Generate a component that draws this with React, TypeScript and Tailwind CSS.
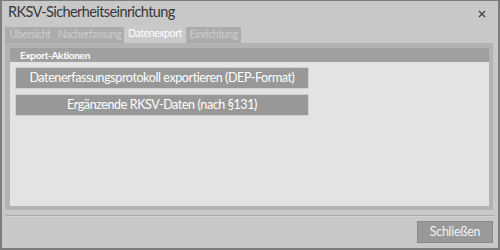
const tabs = [
  { label: 'Übersicht', w: 'w-[50px]' },
  { label: 'Nacherfassung', w: 'w-[69px]' },
  { label: 'Datenexport', w: 'w-[62px]', active: true },
  { label: 'Einrichtung', w: 'w-[55px]' },
]

export default function App() {
  return (
    <div
      className="w-[500px] h-[250px] bg-[#c8c8c8] border-2 border-t border-[#7c7c7c] flex flex-col text-[#333] whitespace-nowrap"
      style={{ fontFamily: 'Lato, Roboto, sans-serif' }}
    >
      {/* Title */}
      <div className="h-[24px] flex items-start justify-between pl-[6px] pr-[12px] pt-[2px] shrink-0">
        <span className="text-[14.5px] leading-[18px] tracking-[-0.6px] text-[#383838]">RKSV-Sicherheitseinrichtung</span>
        <svg width="8" height="8" viewBox="0 0 8 8" className="text-[#444] mt-[7px]">
          <path d="M1 1 L7 7 M7 1 L1 7" stroke="currentColor" strokeWidth="1.4" />
        </svg>
      </div>

      {/* Tabs */}
      <div className="h-[18px] flex items-end pl-[3px] shrink-0">
        {tabs.map((t) =>
          t.active ? (
            <div
              key={t.label}
              className={`${t.w} h-[18px] bg-[#c9c9c9] text-white text-[10.5px] tracking-[-0.4px] flex items-center justify-center`}
            >
              {t.label}
            </div>
          ) : (
            <div
              key={t.label}
              className={`${t.w} h-[16px] bg-[#acacac] text-[#cdcdcd] text-[10.5px] tracking-[-0.4px] flex items-center justify-center`}
            >
              {t.label}
            </div>
          ),
        )}
      </div>

      {/* Tab panel */}
      <div className="ml-[3px] mr-[5px] h-[167px] bg-[#b3b3b3] pt-[5px] pl-[5px] pr-[4px] pb-[4px] flex shrink-0">
        <div className="flex-1 flex flex-col">
          <div className="h-[14px] bg-[#a0a0a0] text-white text-[10px] tracking-[-0.3px] font-bold pl-[10px] flex items-center">
            Export-Aktionen
          </div>
          <div className="flex-1 bg-[#e3e3e3] pt-[5px] pl-[5px] flex flex-col gap-[5px]">
            <button className="w-[294px] h-[22px] bg-[#989898] border border-[#d0d0d0] text-white text-[12.5px] tracking-[-0.4px] flex items-center justify-center">
              Datenerfassungsprotokoll exportieren (DEP-Format)
            </button>
            <button className="w-[294px] h-[22px] bg-[#989898] border border-[#d0d0d0] text-white text-[12.5px] tracking-[-0.4px] flex items-center justify-center">
              Ergänzende RKSV-Daten (nach §131)
            </button>
          </div>
        </div>
      </div>

      {/* Footer */}
      <div className="mx-[3px] mt-[5px] h-px bg-[#aaaaaa] shrink-0" />
      <div className="h-px mx-[3px] bg-[#d2d2d2] shrink-0" />
      <div className="flex-1 flex justify-end items-start pt-[4px] pr-[5px]">
        <button className="w-[76px] h-[22px] bg-[#999999] border border-[#8a8a8a] text-[#f2f2f2] text-[12.5px] tracking-[-0.3px] flex items-center justify-center">
          Schließen
        </button>
      </div>
    </div>
  )
}
